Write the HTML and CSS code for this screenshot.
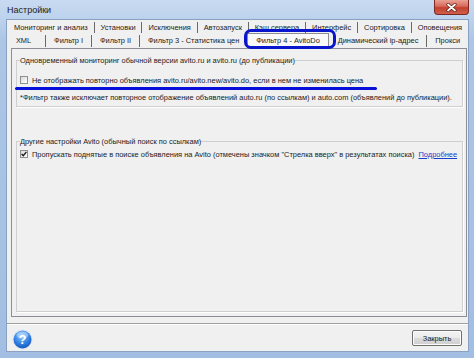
FILE: index.html
```html
<!DOCTYPE html>
<html lang="ru">
<head>
    <meta charset="UTF-8">
    <title>Настройки</title>
    <link rel="stylesheet" href="styles.css">
</head>
<body>
    <div class="window">
        <div class="titlebar">
            <span class="title">Настройки</span>
            <span class="close-btn">
                <svg width="11" height="9" viewBox="0 0 11 9">
                    <path d="M2 1.5 L9 7.5 M9 1.5 L2 7.5" stroke="#5a1c16" stroke-width="3.2" stroke-linecap="round"/>
                    <path d="M2 1.5 L9 7.5 M9 1.5 L2 7.5" stroke="#fff" stroke-width="1.8" stroke-linecap="round"/>
                </svg>
            </span>
        </div>
        <div class="client">
            <div class="tabs">
                <div class="tab-row">
                    <span class="tab">Мониторинг и анализ</span>
                    <span class="tab">Установки</span>
                    <span class="tab">Исключения</span>
                    <span class="tab">Автозапуск</span>
                    <span class="tab">Кэш сервера</span>
                    <span class="tab">Интерфейс</span>
                    <span class="tab">Сортировка</span>
                    <span class="tab tab-last">Оповещения</span>
                </div>
                <div class="tab-row tab-row-bottom">
                    <span class="tab tab-wide">XML</span>
                    <span class="tab">Фильтр I</span>
                    <span class="tab">Фильтр II</span>
                    <span class="tab tab-last">Фильтр 3 - Статистика цен</span>
                    <span class="tab tab-active">Фильтр 4 - AvitoDo</span>
                    <span class="tab">Динамический ip-адрес</span>
                    <span class="tab tab-last">Прокси</span>
                </div>
            </div>
            <div class="tab-page">
                <fieldset class="group">
                    <legend>Одновременный мониторинг обычной версии avito.ru и avito.ru (до публикации)</legend>
                    <label class="check-row check-row-first">
                        <span class="checkbox"></span>
                        Не отображать повторно объявления avito.ru/avito.new/avito.do, если в нем не изменилась цена
                    </label>
                    <p class="note">*Фильтр также исключает повторное отображение объявлений auto.ru (по ссылкам) и auto.com (объявлений до публикации).</p>
                </fieldset>
                <fieldset class="group group-other">
                    <legend>Другие настройки Avito (обычный поиск по ссылкам)</legend>
                    <label class="check-row">
                        <span class="checkbox">
                            <svg width="6" height="6" viewBox="0 0 6 6">
                                <path d="M0.6 3 L2.3 4.8 L5.4 0.9" fill="none" stroke="#1c1c1c" stroke-width="1.4"/>
                            </svg>
                        </span>
                        Пропускать поднятые в поиске объявления на Avito (отмечены значком "Стрелка вверх" в результатах поиска)
                        <a class="more-link" href="#">Подробнее</a>
                    </label>
                </fieldset>
            </div>
            <div class="footer">
                <span class="help-icon">
                    <svg width="21" height="21" viewBox="0 0 21 21">
                        <defs>
                            <radialGradient id="helpFill" cx="0.45" cy="0.3" r="0.75">
                                <stop offset="0" stop-color="#8cc8ff"/>
                                <stop offset="0.6" stop-color="#2f7fe0"/>
                                <stop offset="1" stop-color="#1650b0"/>
                            </radialGradient>
                        </defs>
                        <circle cx="10.5" cy="10.5" r="10" fill="#d9e6f5"/>
                        <circle cx="10.5" cy="10.5" r="9" fill="url(#helpFill)"/>
                        <ellipse cx="10.5" cy="6" rx="6" ry="3.5" fill="#fff" opacity="0.35"/>
                        <text x="10.5" y="15" text-anchor="middle" font-family="Liberation Sans, Arial, sans-serif" font-weight="bold" font-size="13" fill="#fff">?</text>
                    </svg>
                </span>
                <button class="close-button">Закрыть</button>
            </div>
        </div>
        <!-- пометки поверх скриншота -->
        <div class="mark mark-tab"></div>
        <div class="mark mark-line"></div>
    </div>
</body>
</html>
```

FILE: styles.css
```css
html, body {
    margin: 0;
    padding: 0;
    background: #a9c3e4;
    font-family: "Liberation Sans", Arial, sans-serif;
    font-size: 7.45px;
    color: #222;
}
.window {
    position: relative;
    width: 474px;
    height: 358px;
    box-sizing: border-box;
    padding: 0 5px 6px 6px;
    display: flex;
    flex-direction: column;
    background: linear-gradient(#c9dbf1, #adc6e6 40px, #a2bee2);
}
.titlebar {
    height: 19px;
    display: flex;
    justify-content: space-between;
    align-items: flex-start;
}
.title {
    font-size: 9px;
    margin: 5px 0 0 1px;
    color: #1c1c1c;
}
.close-btn {
    width: 35px;
    height: 15px;
    box-sizing: border-box;
    display: flex;
    align-items: center;
    justify-content: center;
    border: 1px solid #7a2a22;
    border-top: none;
    border-radius: 0 0 4px 4px;
    background: linear-gradient(#e8a194, #d8685a 45%, #c3402f 55%, #d0604c);
}
.client {
    flex: 1;
    background: #f0f0f0;
    border: 1px solid #8aa2c2;
    display: flex;
    flex-direction: column;
}
/* Tabs */
.tabs {
    padding: 1px 0 0 1px;
}
.tab-row {
    display: flex;
    height: 13px;
}
.tab-row-bottom {
    height: 14px;
}
.tab {
    flex: 1 1 auto;
    text-align: center;
    line-height: 11px;
    margin: 1px 0;
    white-space: nowrap;
    border-right: 1px solid #6a6a6a;
}
.tab-wide {
    padding-right: 6px;
}
.tab-last {
    border-right: none;
}
.tab-active {
    margin: -1px 1px 0 0;
    line-height: 14px;
    background: #f9f9f9;
    border: 1px solid #8b8e96;
    border-bottom: none;
    position: relative;
    z-index: 1;
}
/* Tab page */
.tab-page {
    flex: 1;
    margin: 0 1px 0 4px;
    border: 1px solid #8b8e96;
    background: #f0f0f0;
    padding: 7px 3px 4px 4px;
    display: flex;
    flex-direction: column;
}
.group {
    margin: 0;
    padding: 0 3px 3px 3px;
    border: 1px solid #cfcfcf;
    box-shadow: 1px 1px 0 #fff;
}
.group legend {
    padding: 0;
    line-height: 9px;
}
.group-other {
    flex: 1;
    margin-top: 30px;
}
.check-row {
    display: flex;
    align-items: center;
    gap: 4px;
    height: 10px;
    margin-top: 3px;
    white-space: nowrap;
}
.check-row-first {
    margin-top: 10px;
}
.checkbox {
    width: 8px;
    height: 8px;
    box-sizing: border-box;
    border: 1px solid #8e8f8f;
    background: linear-gradient(135deg, #d8d8d8, #fff);
    display: flex;
    align-items: center;
    justify-content: center;
}
.more-link {
    color: #1a3ec8;
    text-decoration: underline;
}
.note {
    margin: 8px 0 0 0;
    line-height: 10px;
    white-space: nowrap;
}
/* Footer */
.footer {
    margin-top: 6px;
    height: 28px;
    box-sizing: border-box;
    border-top: 1px solid #a0a0a0;
    box-shadow: inset 0 1px 0 #fff;
    display: flex;
    justify-content: space-between;
    align-items: flex-start;
    padding: 5px 6px 0 5px;
}
.help-icon {
    display: flex;
    width: 21px;
    height: 21px;
}
.close-button {
    width: 50px;
    height: 16px;
    margin-top: 1px;
    padding: 0;
    font-family: inherit;
    font-size: 7.45px;
    color: #222;
    border: 1px solid #707070;
    border-radius: 2px;
    background: linear-gradient(#f3f3f3, #ebebeb 50%, #dcdcdc 50%, #cfcfcf);
    box-shadow: inset 0 0 0 1px #fcfcfc;
}
/* Annotation marks over the screenshot */
.mark {
    position: absolute;
    z-index: 5;
}
.mark-tab {
    left: 244px;
    top: 29px;
    width: 92px;
    height: 20px;
    box-sizing: border-box;
    border: 3px solid #0a16cc;
    border-radius: 7px;
}
.mark-line {
    left: 15px;
    top: 87px;
    width: 362px;
    height: 3px;
    border-radius: 2px;
    background: #0610d8;
}
```
